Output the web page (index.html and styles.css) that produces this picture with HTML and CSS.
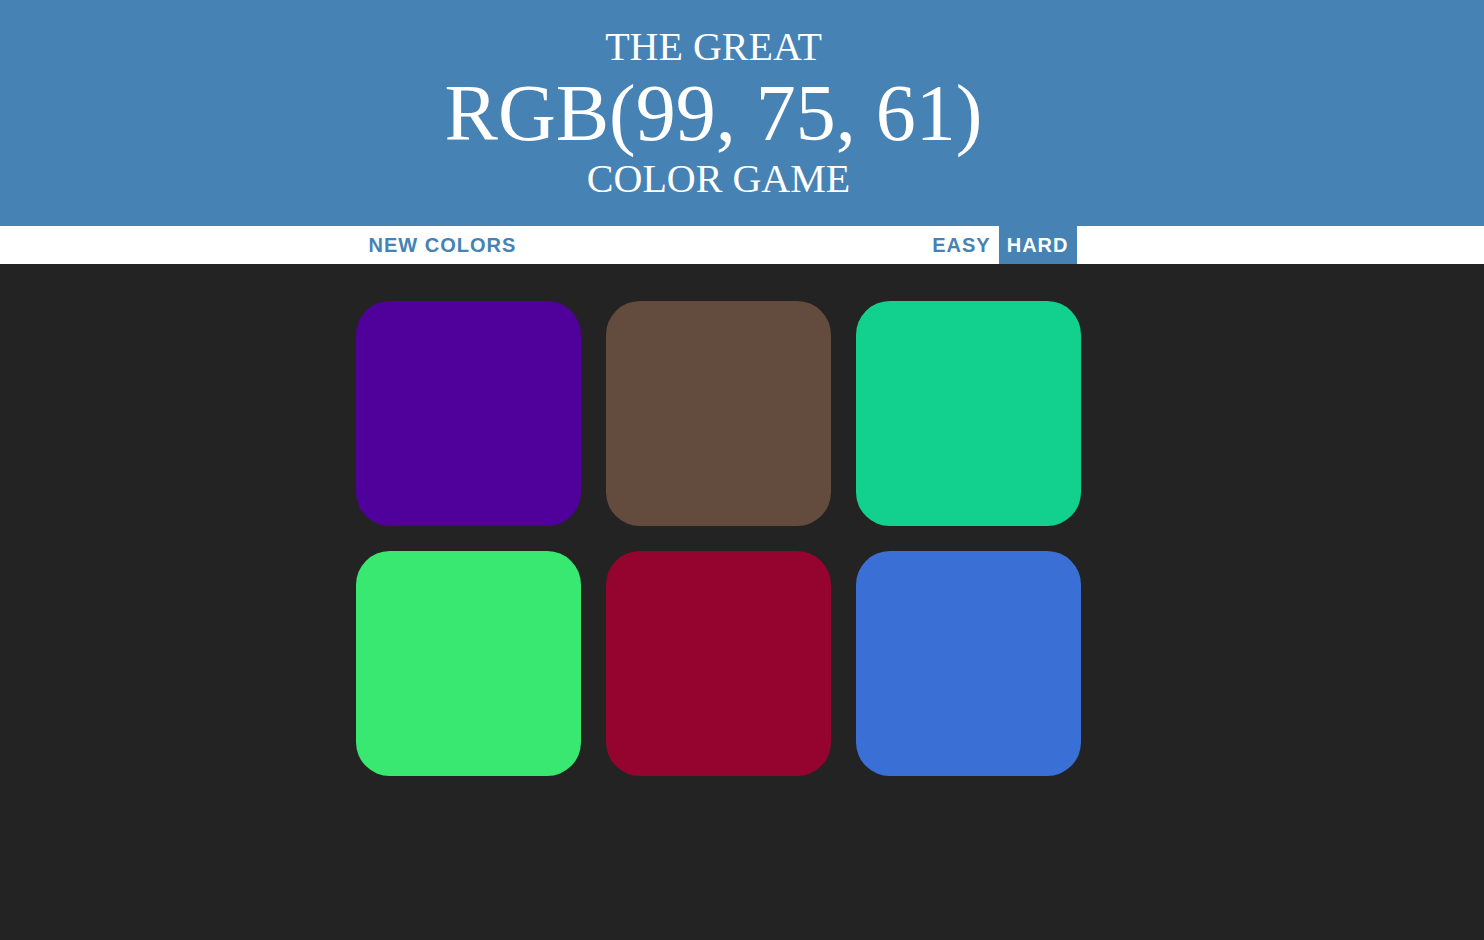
FILE: index.html
```html
<!DOCTYPE html>
<html lang="en">
<head>
<meta charset="utf-8">
<title>Color Game</title>
<link rel="stylesheet" href="styles.css">
</head>
<body>
  <header class="header">
    <h1 class="title">
      <span class="title-line trail">The Great</span>
      <span class="color-display trail">RGB(99, 75, 61)</span>
      <span class="title-line">Color Game</span>
    </h1>
  </header>
  <nav class="stripe">
    <div class="stripe-inner">
      <button class="btn">New Colors</button>
      <span class="message"></span>
      <div class="modes">
        <button class="btn">Easy</button>
        <button class="btn selected">Hard</button>
      </div>
    </div>
  </nav>
  <main class="board">
    <div class="squares">
      <div class="square sq-purple"></div>
      <div class="square sq-brown"></div>
      <div class="square sq-teal"></div>
      <div class="square sq-green"></div>
      <div class="square sq-crimson"></div>
      <div class="square sq-blue"></div>
    </div>
  </main>
</body>
</html>
```
FILE: styles.css
```css
html, body {
  margin: 0;
  padding: 0;
}

body {
  background: #232323;
  min-height: 940px;
  font-family: "Liberation Sans", Arial, sans-serif;
}

.header {
  background: #4682b4;
  padding: 25px 47px 25px 0;
}

.title {
  margin: 0;
  color: #fff;
  font-family: "Liberation Serif", "Times New Roman", serif;
  font-weight: normal;
  text-transform: uppercase;
  text-align: center;
  font-size: 40px;
  line-height: 1.1;
}

.title-line,
.color-display {
  display: block;
}

.trail {
  padding-right: 10px;
}

.color-display {
  font-size: 80px;
}

.stripe {
  background: #fff;
  height: 38px;
  padding-right: 47px;
}

.stripe-inner {
  width: 716px;
  height: 100%;
  margin: 0 auto;
  padding: 0 17px;
  display: flex;
  justify-content: space-between;
  align-items: stretch;
}

.modes {
  display: flex;
}

.btn {
  border: none;
  background: none;
  margin: 0;
  padding: 0 8px;
  height: 100%;
  font-family: "Liberation Sans", Arial, sans-serif;
  font-size: 20px;
  font-weight: 700;
  letter-spacing: 1px;
  text-transform: uppercase;
  color: #4682b4;
  cursor: pointer;
}

.btn.selected {
  background: #4682b4;
  color: #fff;
}

.board {
  padding: 37px 47px 0 0;
}

.squares {
  width: 725px;
  margin: 0 auto;
  display: grid;
  grid-template-columns: repeat(3, 225px);
  grid-auto-rows: 225px;
  gap: 25px;
}

.square {
  border-radius: 15%;
}

.sq-purple { background: rgb(80, 0, 155); }
.sq-brown { background: rgb(99, 75, 61); }
.sq-teal { background: rgb(18, 208, 142); }
.sq-green { background: rgb(56, 232, 112); }
.sq-crimson { background: rgb(148, 4, 46); }
.sq-blue { background: rgb(58, 111, 214); }
```
